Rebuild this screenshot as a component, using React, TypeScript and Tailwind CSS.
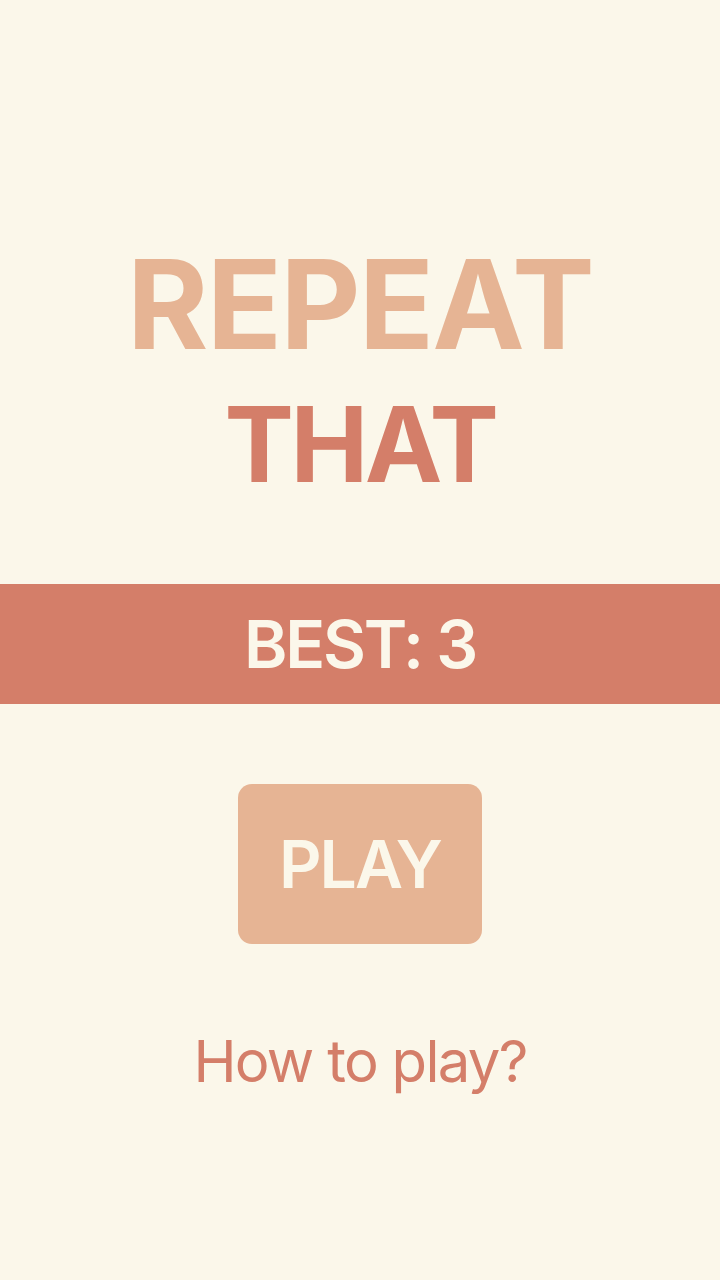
export default function App() {
  return (
    <div
      className="flex min-h-[1280px] w-full flex-col items-center bg-[#fbf7ea]"
      style={{ fontFamily: "Inter, 'Noto Sans', sans-serif" }}
    >
      <h1 className="mt-[242px] flex flex-col items-center font-bold leading-none">
        <span className="text-[124px] leading-none tracking-[-1.8px] text-[#e6b494]">REPEAT</span>
        <span className="mt-[26px] text-[104px] leading-none tracking-[-3.5px] text-[#d47e69]">THAT</span>
      </h1>

      <div className="mt-[88px] flex h-[120px] w-full items-center justify-center bg-[#d47e69]">
        <span className="text-[66px] font-semibold leading-none tracking-[-2.2px] text-[#fbf7ea]">BEST: 3</span>
      </div>

      <button className="mt-[80px] flex h-[160px] w-[244px] items-center justify-center rounded-[14px] bg-[#e6b494]">
        <span className="text-[66px] font-semibold leading-none tracking-[-2px] text-[#fbf7ea]">PLAY</span>
      </button>

      <button className="mt-[88px] text-[58px] leading-none tracking-[-1.7px] text-[#d47e69]">How to play?</button>
    </div>
  );
}
